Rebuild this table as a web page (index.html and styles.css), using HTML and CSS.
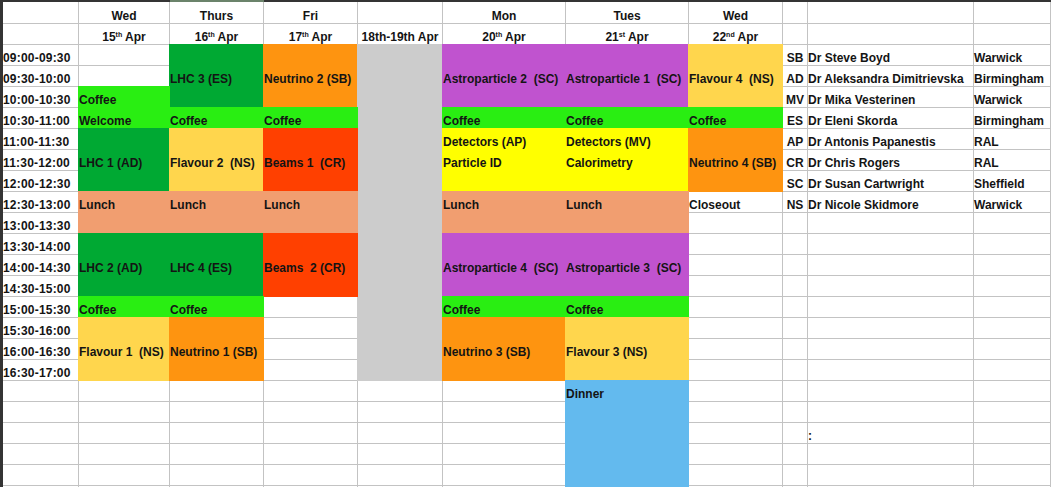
FILE: index.html
```html
<!DOCTYPE html>
<html>
<head>
<meta charset="utf-8">
<link rel="stylesheet" href="styles.css">
</head>
<body>
<div class="sheet">
  <div class="bar-left"></div>
  <div class="top top-a"></div><div class="top sel"></div><div class="top top-b"></div>

  <!-- header row 1 -->
  <div class="c"></div>
  <div class="c h">Wed</div>
  <div class="c h">Thurs</div>
  <div class="c h">Fri</div>
  <div class="c"></div>
  <div class="c h">Mon</div>
  <div class="c h">Tues</div>
  <div class="c h">Wed</div>
  <div class="c"></div><div class="c"></div><div class="c"></div>

  <!-- header row 2 -->
  <div class="c"></div>
  <div class="c h"><span>15<span class="sup">th</span> Apr</span></div>
  <div class="c h"><span>16<span class="sup">th</span> Apr</span></div>
  <div class="c h"><span>17<span class="sup">th</span> Apr</span></div>
  <div class="c h">18th-19th Apr</div>
  <div class="c h"><span>20<span class="sup">th</span> Apr</span></div>
  <div class="c h"><span>21<span class="sup">st</span> Apr</span></div>
  <div class="c h"><span>22<span class="sup">nd</span> Apr</span></div>
  <div class="c"></div><div class="c"></div><div class="c"></div>

  <!-- r0 09:00 -->
  <div class="c tm">09:00-09:30</div>
  <div class="c"></div>
  <div class="b dg s3"><div class="l"></div><div class="l">LHC 3 (ES)</div><div class="l"></div></div>
  <div class="b or s3"><div class="l"></div><div class="l">Neutrino 2 (SB)</div><div class="l"></div></div>
  <div class="b gy s16"></div>
  <div class="b pu s3"><div class="l"></div><div class="l">Astroparticle 2  (SC)</div><div class="l"></div></div>
  <div class="b pu s3"><div class="l"></div><div class="l">Astroparticle 1  (SC)</div><div class="l"></div></div>
  <div class="b fl s3"><div class="l"></div><div class="l">Flavour 4  (NS)</div><div class="l"></div></div>
  <div class="c ini">SB</div><div class="c">Dr Steve Boyd</div><div class="c">Warwick</div>

  <!-- r1 09:30 -->
  <div class="c tm">09:30-10:00</div>
  <div class="c"></div>
  <div class="c ini">AD</div><div class="c">Dr Aleksandra Dimitrievska</div><div class="c">Birmingham</div>

  <!-- r2 10:00 -->
  <div class="c tm">10:00-10:30</div>
  <div class="b lg s2"><div class="l">Coffee</div><div class="l">Welcome</div></div>
  <div class="c ini">MV</div><div class="c">Dr Mika Vesterinen</div><div class="c">Warwick</div>

  <!-- r3 10:30 -->
  <div class="c tm">10:30-11:00</div>
  <div class="b lg"><div class="l">Coffee</div></div>
  <div class="b lg"><div class="l">Coffee</div></div>
  <div class="b lg"><div class="l">Coffee</div></div>
  <div class="b lg"><div class="l">Coffee</div></div>
  <div class="b lg"><div class="l">Coffee</div></div>
  <div class="c ini">ES</div><div class="c">Dr Eleni Skorda</div><div class="c">Birmingham</div>

  <!-- r4 11:00 -->
  <div class="c tm">11:00-11:30</div>
  <div class="b dg s3"><div class="l"></div><div class="l">LHC 1 (AD)</div><div class="l"></div></div>
  <div class="b fl s3"><div class="l"></div><div class="l">Flavour 2  (NS)</div><div class="l"></div></div>
  <div class="b rd s3"><div class="l"></div><div class="l">Beams 1  (CR)</div><div class="l"></div></div>
  <div class="b ye s3"><div class="l">Detectors (AP)</div><div class="l">Particle ID</div><div class="l"></div></div>
  <div class="b ye s3"><div class="l">Detectors (MV)</div><div class="l">Calorimetry</div><div class="l"></div></div>
  <div class="b or s3"><div class="l"></div><div class="l">Neutrino 4 (SB)</div><div class="l"></div></div>
  <div class="c ini">AP</div><div class="c">Dr Antonis Papanestis</div><div class="c">RAL</div>

  <!-- r5 11:30 -->
  <div class="c tm">11:30-12:00</div>
  <div class="c ini">CR</div><div class="c">Dr Chris Rogers</div><div class="c">RAL</div>

  <!-- r6 12:00 -->
  <div class="c tm">12:00-12:30</div>
  <div class="c ini">SC</div><div class="c">Dr Susan Cartwright</div><div class="c">Sheffield</div>

  <!-- r7 12:30 -->
  <div class="c tm">12:30-13:00</div>
  <div class="b lu s2"><div class="l">Lunch</div><div class="l"></div></div>
  <div class="b lu s2"><div class="l">Lunch</div><div class="l"></div></div>
  <div class="b lu s2"><div class="l">Lunch</div><div class="l"></div></div>
  <div class="b lu s2"><div class="l">Lunch</div><div class="l"></div></div>
  <div class="b lu s2"><div class="l">Lunch</div><div class="l"></div></div>
  <div class="c">Closeout</div>
  <div class="c ini">NS</div><div class="c">Dr Nicole Skidmore</div><div class="c">Warwick</div>

  <!-- r8 13:00 -->
  <div class="c tm">13:00-13:30</div>
  <div class="c"></div>
  <div class="c"></div><div class="c"></div><div class="c"></div>

  <!-- r9 13:30 -->
  <div class="c tm">13:30-14:00</div>
  <div class="b dg s3"><div class="l"></div><div class="l">LHC 2 (AD)</div><div class="l"></div></div>
  <div class="b dg s3"><div class="l"></div><div class="l">LHC 4 (ES)</div><div class="l"></div></div>
  <div class="b rd s3"><div class="l"></div><div class="l">Beams  2 (CR)</div><div class="l"></div></div>
  <div class="b pu s3"><div class="l"></div><div class="l">Astroparticle 4  (SC)</div><div class="l"></div></div>
  <div class="b pu s3"><div class="l"></div><div class="l">Astroparticle 3  (SC)</div><div class="l"></div></div>
  <div class="c"></div>
  <div class="c"></div><div class="c"></div><div class="c"></div>

  <!-- r10 14:00 -->
  <div class="c tm">14:00-14:30</div>
  <div class="c"></div>
  <div class="c"></div><div class="c"></div><div class="c"></div>

  <!-- r11 14:30 -->
  <div class="c tm">14:30-15:00</div>
  <div class="c"></div>
  <div class="c"></div><div class="c"></div><div class="c"></div>

  <!-- r12 15:00 -->
  <div class="c tm">15:00-15:30</div>
  <div class="b lg"><div class="l">Coffee</div></div>
  <div class="b lg"><div class="l">Coffee</div></div>
  <div class="c"></div>
  <div class="b lg"><div class="l">Coffee</div></div>
  <div class="b lg"><div class="l">Coffee</div></div>
  <div class="c"></div>
  <div class="c"></div><div class="c"></div><div class="c"></div>

  <!-- r13 15:30 -->
  <div class="c tm">15:30-16:00</div>
  <div class="b fl s3"><div class="l"></div><div class="l">Flavour 1  (NS)</div><div class="l"></div></div>
  <div class="b or s3"><div class="l"></div><div class="l">Neutrino 1 (SB)</div><div class="l"></div></div>
  <div class="c"></div>
  <div class="b or s3"><div class="l"></div><div class="l">Neutrino 3 (SB)</div><div class="l"></div></div>
  <div class="b fl s3"><div class="l"></div><div class="l">Flavour 3 (NS)</div><div class="l"></div></div>
  <div class="c"></div>
  <div class="c"></div><div class="c"></div><div class="c"></div>

  <!-- r14 16:00 -->
  <div class="c tm">16:00-16:30</div>
  <div class="c"></div>
  <div class="c"></div>
  <div class="c"></div><div class="c"></div><div class="c"></div>

  <!-- r15 16:30 -->
  <div class="c tm">16:30-17:00</div>
  <div class="c"></div>
  <div class="c"></div>
  <div class="c"></div><div class="c"></div><div class="c"></div>

  <!-- r16 -->
  <div class="c"></div><div class="c"></div><div class="c"></div><div class="c"></div><div class="c"></div><div class="c"></div>
  <div class="b bl s6"><div class="l">Dinner</div></div>
  <div class="c"></div><div class="c"></div><div class="c"></div><div class="c"></div>

  <!-- r17 -->
  <div class="c"></div><div class="c"></div><div class="c"></div><div class="c"></div><div class="c"></div><div class="c"></div>
  <div class="c"></div><div class="c"></div><div class="c"></div><div class="c"></div>

  <!-- r18 -->
  <div class="c"></div><div class="c"></div><div class="c"></div><div class="c"></div><div class="c"></div><div class="c"></div>
  <div class="c"></div><div class="c"></div><div class="c">:</div><div class="c"></div>

  <!-- r19 -->
  <div class="c"></div><div class="c"></div><div class="c"></div><div class="c"></div><div class="c"></div><div class="c"></div>
  <div class="c"></div><div class="c"></div><div class="c"></div><div class="c"></div>

  <!-- r20 -->
  <div class="c"></div><div class="c"></div><div class="c"></div><div class="c"></div><div class="c"></div><div class="c"></div>
  <div class="c"></div><div class="c"></div><div class="c"></div><div class="c"></div>

  <!-- r21 -->
  <div class="c"></div><div class="c"></div><div class="c"></div><div class="c"></div><div class="c"></div><div class="c"></div>
  <div class="c"></div><div class="c"></div><div class="c"></div><div class="c"></div>
</div>
</body>
</html>
```

FILE: styles.css
```css
html, body {
  margin: 0;
  padding: 0;
  background: #ffffff;
  overflow: hidden;
  height: 487px;
}

.sheet {
  display: grid;
  grid-template-columns: 3px 76px 91px 94px 94px 85px 123px 123px 94px 25px 166px 77px;
  grid-template-rows: 2px 22px;
  grid-auto-rows: 21px;
  width: 1051px;
  background: #ffffff;
  font-family: "Liberation Sans", Arial, sans-serif;
  font-weight: bold;
  font-size: 12px;
  line-height: 14px;
  color: #141414;
}

.bar-left {
  grid-column: 1;
  grid-row: 2 / span 24;
  background: #343434;
}

.top { background: #343434; }
.top-a { grid-column: span 3; }
.top.sel { background: #6b836b; }
.top-b { grid-column: span 8; }

.c {
  box-sizing: border-box;
  border-right: 1px solid #c3c3c3;
  border-bottom: 1px solid #c3c3c3;
  display: flex;
  align-items: flex-end;
  white-space: pre;
  min-width: 0;
}

.tm { letter-spacing: 0.2px; }

.h { justify-content: center; }
.ini { justify-content: center; }

.sup {
  font-size: 7px;
  line-height: 0;
  vertical-align: 4px;
}

.b {
  z-index: 1;
  margin: -1px 0 0 -1px;
  padding: 1px 0 0 1px;
  box-sizing: border-box;
  display: flex;
  flex-direction: column;
  white-space: pre;
  min-width: 0;
}

.l {
  height: 21px;
  flex: none;
  box-sizing: border-box;
  padding-bottom: 1px;
  display: flex;
  align-items: flex-end;
}

.s2 { grid-row: span 2; }
.s3 { grid-row: span 3; }
.s6 { grid-row: span 6; }
.s16 { grid-row: span 16; }

.lg { background: #29ee12; }
.dg { background: #00a933; }
.or { background: #fe9410; }
.rd { background: #ff4000; }
.fl { background: #ffd64d; }
.lu { background: #f19e70; }
.pu { background: #c053cf; }
.ye { background: #ffff00; }
.gy { background: #cccccc; }
.bl { background: #63baee; }
```
